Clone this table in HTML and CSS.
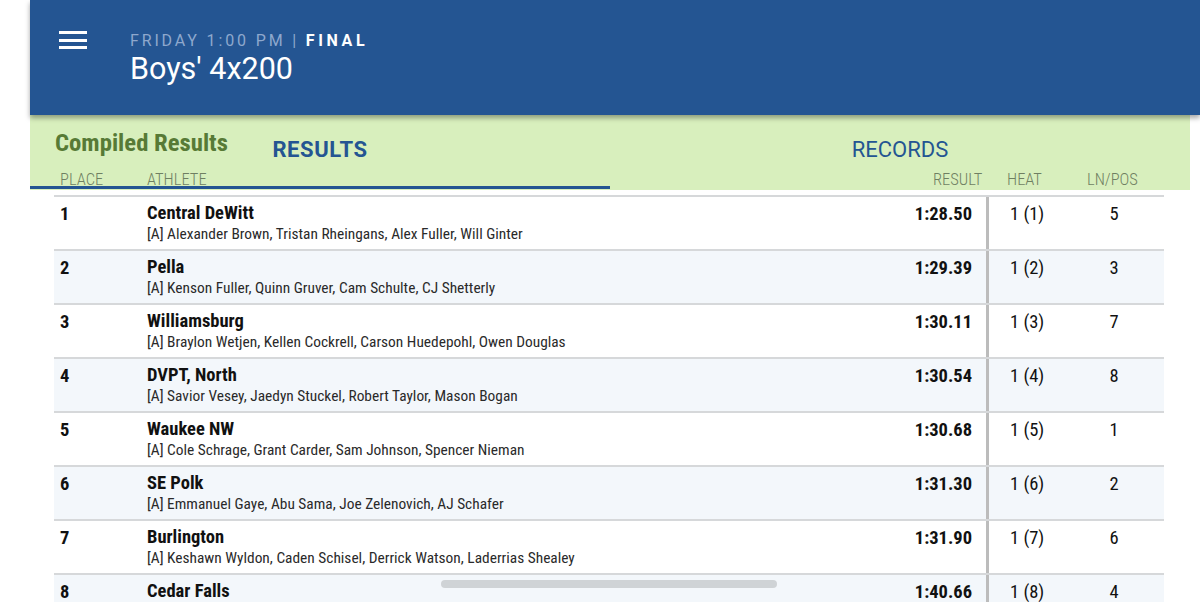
FILE: index.html
```html
<!DOCTYPE html>
<html>
<head>
<meta charset="utf-8">
<link rel="stylesheet" href="styles.css">
</head>
<body>
<div class="page">
  <header class="topbar">
    <div class="menu"><span></span><span></span><span></span></div>
    <div class="titles">
      <div class="meta">FRIDAY 1:00 PM | <b>FINAL</b></div>
      <div class="event">Boys' 4x200</div>
    </div>
  </header>
  <section class="band">
    <div class="tabs">
      <div class="tab active">RESULTS</div>
      <div class="tab">RECORDS</div>
    </div>
    <div class="compiled">Compiled Results</div>
    <div class="cols">
      <div class="c-place">PLACE</div>
      <div class="c-ath">ATHLETE</div>
      <div class="c-res">RESULT</div>
      <div class="c-heat">HEAT</div>
      <div class="c-ln">LN/POS</div>
    </div>
    <div class="indicator"></div>
  </section>
  <div class="table">
    <div class="row">
      <div class="place">1</div>
      <div class="ath"><div class="team">Central DeWitt</div><div class="names">[A] Alexander Brown, Tristan Rheingans, Alex Fuller, Will Ginter</div></div>
      <div class="res">1:28.50</div>
      <div class="heat">1 (1)</div>
      <div class="ln">5</div>
    </div>
    <div class="row alt">
      <div class="place">2</div>
      <div class="ath"><div class="team">Pella</div><div class="names">[A] Kenson Fuller, Quinn Gruver, Cam Schulte, CJ Shetterly</div></div>
      <div class="res">1:29.39</div>
      <div class="heat">1 (2)</div>
      <div class="ln">3</div>
    </div>
    <div class="row">
      <div class="place">3</div>
      <div class="ath"><div class="team">Williamsburg</div><div class="names">[A] Braylon Wetjen, Kellen Cockrell, Carson Huedepohl, Owen Douglas</div></div>
      <div class="res">1:30.11</div>
      <div class="heat">1 (3)</div>
      <div class="ln">7</div>
    </div>
    <div class="row alt">
      <div class="place">4</div>
      <div class="ath"><div class="team">DVPT, North</div><div class="names">[A] Savior Vesey, Jaedyn Stuckel, Robert Taylor, Mason Bogan</div></div>
      <div class="res">1:30.54</div>
      <div class="heat">1 (4)</div>
      <div class="ln">8</div>
    </div>
    <div class="row">
      <div class="place">5</div>
      <div class="ath"><div class="team">Waukee NW</div><div class="names">[A] Cole Schrage, Grant Carder, Sam Johnson, Spencer Nieman</div></div>
      <div class="res">1:30.68</div>
      <div class="heat">1 (5)</div>
      <div class="ln">1</div>
    </div>
    <div class="row alt">
      <div class="place">6</div>
      <div class="ath"><div class="team">SE Polk</div><div class="names">[A] Emmanuel Gaye, Abu Sama, Joe Zelenovich, AJ Schafer</div></div>
      <div class="res">1:31.30</div>
      <div class="heat">1 (6)</div>
      <div class="ln">2</div>
    </div>
    <div class="row">
      <div class="place">7</div>
      <div class="ath"><div class="team">Burlington</div><div class="names">[A] Keshawn Wyldon, Caden Schisel, Derrick Watson, Laderrias Shealey</div></div>
      <div class="res">1:31.90</div>
      <div class="heat">1 (7)</div>
      <div class="ln">6</div>
    </div>
    <div class="row alt">
      <div class="place">8</div>
      <div class="ath"><div class="team">Cedar Falls</div><div class="names">&nbsp;</div></div>
      <div class="res">1:40.66</div>
      <div class="heat">1 (8)</div>
      <div class="ln">4</div>
    </div>
  </div>
  <div class="scrollthumb"></div>
</div>
</body>
</html>
```
FILE: styles.css
```css
* { box-sizing: border-box; }
html, body { margin: 0; padding: 0; background: #fff; height: 602px; overflow: hidden; }
body { font-family: "Roboto Condensed", "Liberation Sans Narrow", "DejaVu Sans Condensed", sans-serif; color: #111; }
.page { position: relative; padding-left: 30px; width: 1200px; }
.topbar {
  height: 115px; background: #245592; display: flex; align-items: flex-start;
  box-shadow: 0 3px 5px rgba(0,0,0,0.35); position: relative; z-index: 2;
  font-family: Roboto, "Noto Sans", sans-serif;
}
.menu { margin: 31px 0 0 29px; width: 28px; display: flex; flex-direction: column; gap: 4.5px; }
.menu span { display: block; height: 3px; background: #fff; }
.titles { margin: 31px 0 0 43px; }
.meta { font-size: 16px; letter-spacing: 2.85px; color: #8ea8cd; line-height: 19px; white-space: nowrap; }
.meta b { color: #fff; font-weight: 700; letter-spacing: 3.6px; }
.event { font-size: 30.5px; color: #fff; line-height: 36px; margin-top: 1px; }
.band { position: relative; width: 1160px; height: 75px; background: #d8efbd; }
.tabs { display: grid; grid-template-columns: 1fr 1fr; height: 56px; padding-top: 22px; font-family: Roboto, "Noto Sans", sans-serif; }
.tab { text-align: center; font-size: 22px; color: #245592; line-height: 26px; }
.tab.active { font-weight: 700; letter-spacing: 0.6px; }
.compiled { position: absolute; left: 25px; top: 13px; font-size: 24.7px; font-weight: 700; color: #577a36; }
.cols { display: flex; font-size: 16.5px; font-weight: 300; color: #6f7f62; padding: 0 25px 0 30px; line-height: 18px; }
.c-place { width: 87px; }
.c-ath { flex: 1; }
.c-res { width: 74px; }
.c-heat { width: 80px; }
.c-ln { width: 78px; }
.indicator { position: absolute; left: 0; bottom: 1px; width: 580px; height: 3px; background: #245592; }
.table { margin: 5px 0 0 24px; width: 1110px; border-top: 2px solid #d6d8da; }
.row { display: flex; height: 54px; border-bottom: 2px solid #d6d8da; }
.row.alt { background: #f3f7fb; }
.place { width: 93px; padding: 6px 0 0 6px; font-size: 18.5px; font-weight: 700; }
.ath { flex: 1; padding-top: 5px; }
.team { font-size: 18.5px; font-weight: 700; line-height: 22px; }
.names { font-size: 15.4px; line-height: 20px; color: #2a2a2a; }
.res { width: 160px; text-align: right; padding: 6px 14px 0 0; font-size: 18.5px; font-weight: 700; border-right: 3px solid #bcbcbc; }
.heat { width: 75px; padding: 6px 0 0 21px; font-size: 18.5px; }
.ln { width: 100px; padding-top: 6px; font-size: 18.5px; text-align: center; }
.scrollthumb { position: absolute; left: 441px; top: 580px; width: 336px; height: 8px; border-radius: 4px; background: #cfd3d6; }
```
